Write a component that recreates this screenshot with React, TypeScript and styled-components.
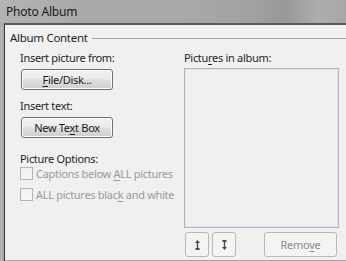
import styled, { createGlobalStyle } from "styled-components";

const GlobalStyle = createGlobalStyle`
  html, body {
    margin: 0;
    padding: 0;
    background: #f0f0f0;
  }
  body {
    font-family: "Segoe UI", "Noto Sans", sans-serif;
    font-size: 11px;
    letter-spacing: -0.3px;
    color: #1e1e1e;
  }
`;

const Window = styled.div`
  width: 346px;
  height: 261px;
  display: flex;
  flex-direction: column;
  overflow: hidden;
  background: #f0f0f0;
`;

const TitleBar = styled.div`
  height: 23px;
  flex: none;
  display: flex;
  align-items: center;
  padding-left: 6px;
  font-size: 12px;
  letter-spacing: -0.2px;
  line-height: 16px;
  color: #1a1a1a;
  background: linear-gradient(
    90deg,
    #b3b3b3 0%,
    #a9a9a9 22%,
    #a8a8a8 55%,
    #a2a2a2 72%,
    #989898 82%,
    #adadad 92%,
    #a6a6a6 100%
  );
`;

const Frame = styled.div`
  flex: 1;
  display: flex;
  padding-left: 4px;
  background: linear-gradient(90deg, #9c9c9c 0, #bdbdbd 1px, #b3b3b3 2px, #a4a4a4 3px);
`;

const Body = styled.div`
  flex: 1;
  display: flex;
  flex-direction: column;
  background: #f0f0f0;
  border-left: 1px solid #3c3c3c;
  border-top: 2px solid #5a5a5a;
`;

const Group = styled.div`
  flex: 1;
  display: flex;
  flex-direction: column;
  padding-left: 5px;
  border-bottom: 1px solid #a6a6a6;
`;

const GroupHeader = styled.div`
  display: flex;
  align-items: center;
  gap: 4px;
  height: 16px;
  margin-top: 5px;
  font-size: 11.5px;
  line-height: 16px;
`;

const Rule = styled.div`
  flex: 1;
  height: 1px;
  background: #a6a6a6;
`;

const Columns = styled.div`
  flex: 1;
  display: flex;
  margin-left: 10px;
  margin-top: 4px;
`;

const LeftCol = styled.div`
  width: 164px;
  display: flex;
  flex-direction: column;
`;

const RightCol = styled.div`
  width: 155px;
  display: flex;
  flex-direction: column;
`;

const Label = styled.div<{ $gap?: number }>`
  line-height: 16px;
  height: 16px;
  margin-top: ${(p) => p.$gap ?? 0}px;
  white-space: nowrap;
`;

const Key = styled.span`
  text-decoration: underline;
  text-underline-offset: 2px;
`;

const PushButton = styled.button`
  box-sizing: border-box;
  width: 92px;
  height: 21px;
  margin: 3px 0 0 1px;
  padding: 0;
  font: inherit;
  letter-spacing: inherit;
  color: #1a1a1a;
  line-height: 17px;
  border: 1px solid #707070;
  border-radius: 3px;
  box-shadow: inset 0 0 0 1px #fcfcfc;
  background: linear-gradient(180deg, #f2f2f2 0%, #ebebeb 48%, #dddddd 52%, #cfcfcf 100%);
`;

const CheckList = styled.div`
  display: flex;
  flex-direction: column;
  gap: 8px;
`;

const CheckRow = styled.div`
  display: flex;
  align-items: center;
  gap: 3px;
  height: 13px;
  color: #9a9a9a;
  white-space: nowrap;
`;

const Box = styled.span`
  box-sizing: border-box;
  width: 13px;
  height: 13px;
  flex: none;
  border: 1px solid #b4b4b4;
  background: linear-gradient(180deg, #f0f0f0, #f6f6f6);
`;

const ListBox = styled.div`
  box-sizing: border-box;
  height: 160px;
  margin-top: 2px;
  border: 1px solid #a9b7c6;
  box-shadow: inset 0 0 0 1px #dbe5ef;
  background: #f0f0f0;
`;

const ListActions = styled.div`
  display: flex;
  align-items: center;
  gap: 3px;
  margin-top: 4px;
  padding: 0 2px 0 1px;
`;

const DisabledButton = styled.button<{ $wide?: boolean }>`
  box-sizing: border-box;
  width: ${(p) => (p.$wide ? 73 : 24)}px;
  height: 25px;
  margin-left: ${(p) => (p.$wide ? "auto" : "0")};
  padding: 0;
  display: flex;
  align-items: center;
  justify-content: center;
  font: inherit;
  letter-spacing: inherit;
  color: #8a8a8a;
  border: 1px solid #b9b9b9;
  border-radius: 3px;
  background: #f4f4f4;
`;

const Arrow = ({ down }: { down?: boolean }) => (
  <svg width="7" height="10" viewBox="0 0 7 10" style={{ transform: down ? "scaleY(-1)" : undefined }}>
    <path d="M3.5 0 L6 3 L4.2 3 L4.2 8 L5.5 8 L5.5 10 L1.5 10 L1.5 8 L2.8 8 L2.8 3 L1 3 Z" fill="#4a4a4a" />
  </svg>
);

export default function App() {
  return (
    <>
      <GlobalStyle />
      <Window>
        <TitleBar>Photo Album</TitleBar>
        <Frame>
          <Body>
            <Group>
              <GroupHeader>
                <span>Album Content</span>
                <Rule />
              </GroupHeader>
              <Columns>
                <LeftCol>
                  <Label>Insert picture from:</Label>
                  <PushButton>
                    <Key>F</Key>ile/Disk...
                  </PushButton>
                  <Label $gap={8}>Insert text:</Label>
                  <PushButton>
                    New Te<Key>x</Key>t Box
                  </PushButton>
                  <Label $gap={13}>Picture Options:</Label>
                  <CheckList>
                    <CheckRow>
                      <Box />
                      <span>
                        Captions below <Key>A</Key>LL pictures
                      </span>
                    </CheckRow>
                    <CheckRow>
                      <Box />
                      <span>
                        ALL pictures blac<Key>k</Key> and white
                      </span>
                    </CheckRow>
                  </CheckList>
                </LeftCol>
                <RightCol>
                  <Label>
                    Pictu<Key>r</Key>es in album:
                  </Label>
                  <ListBox />
                  <ListActions>
                    <DisabledButton>
                      <Arrow />
                    </DisabledButton>
                    <DisabledButton>
                      <Arrow down />
                    </DisabledButton>
                    <DisabledButton $wide>
                      Remo<Key>v</Key>e
                    </DisabledButton>
                  </ListActions>
                </RightCol>
              </Columns>
            </Group>
          </Body>
        </Frame>
      </Window>
    </>
  );
}
